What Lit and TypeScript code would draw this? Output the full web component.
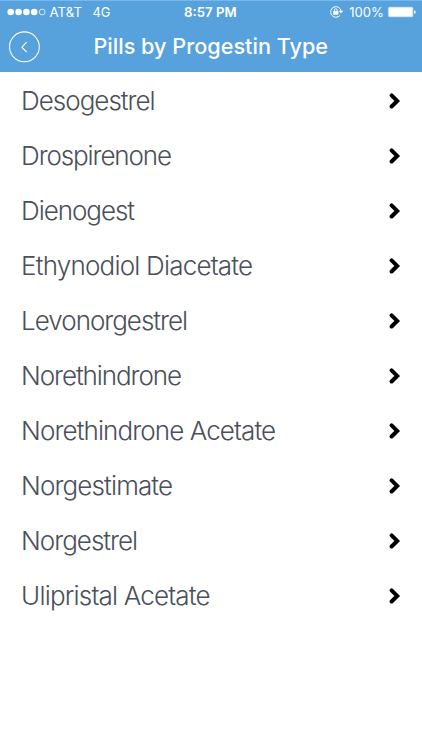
import { LitElement, html, css } from "lit";
import { customElement } from "lit/decorators.js";

// Progestin name and the width its label occupies in the list.
const PROGESTINS: Array<[string, number]> = [
  ["Desogestrel", 134.5],
  ["Drospirenone", 151],
  ["Dienogest", 114],
  ["Ethynodiol Diacetate", 232],
  ["Levonorgestrel", 167],
  ["Norethindrone", 161],
  ["Norethindrone Acetate", 255],
  ["Norgestimate", 152],
  ["Norgestrel", 117],
  ["Ulipristal Acetate", 189.5],
];

@customElement("status-bar")
class StatusBar extends LitElement {
  static styles = css`
    :host { display: block; height: 24px; font-size: 13.3px; }
    svg { display: block; width: 100%; height: 24px; }
    .thin { font-weight: 400; }
    .bold { font-weight: 600; }
  `;
  render() {
    return html`<svg viewBox="0 0 422 24" fill="#fff">
      <circle cx="10.7" cy="12" r="3.3" />
      <circle cx="18.6" cy="12" r="3.3" />
      <circle cx="26.4" cy="12" r="3.3" />
      <circle cx="34.2" cy="12" r="3.3" />
      <circle cx="42.2" cy="12" r="2.9" fill="none" stroke="#fff" stroke-width=".7" />
      <text class="thin" x="49.6" y="16.7" textLength="32.4" lengthAdjust="spacingAndGlyphs">AT&amp;T</text>
      <text class="thin" x="92.5" y="16.7" textLength="18" lengthAdjust="spacingAndGlyphs">4G</text>
      <text class="bold" x="184" y="16.7" textLength="52.7" lengthAdjust="spacingAndGlyphs">8:57 PM</text>
      <path d="M339.8 15.6A5.3 5.3 0 1 1 341.2 11.2" fill="none" stroke="#fff" stroke-width="1" />
      <path d="M338.8 10.8h4.4l-2.2 2.8z" />
      <rect x="333.2" y="11" width="5.2" height="3.7" rx=".4" />
      <path d="M334.4 11.3v-1.2a1.4 1.4 0 0 1 2.8 0v1.2" fill="none" stroke="#fff" stroke-width=".9" />
      <text class="thin" x="349.2" y="16.7" textLength="34.6" lengthAdjust="spacingAndGlyphs">100%</text>
      <rect x="387.9" y="6.7" width="25.4" height="10.6" rx="1.6" fill="#a9d1f2" />
      <rect x="388.8" y="7.5" width="23.6" height="9" rx=".8" />
      <path d="M414.1 10.2q1.6.4 1.6 1.8t-1.6 1.8z" />
    </svg>`;
  }
}

@customElement("nav-bar")
class NavBar extends LitElement {
  static styles = css`
    :host { display: block; height: 48px; }
    svg { display: block; width: 100%; height: 48px; }
    .title { font-size: 22px; font-weight: 500; }
  `;
  render() {
    return html`<svg viewBox="0 24 422 48" fill="#fff">
      <circle cx="24.4" cy="46.8" r="14.9" fill="none" stroke="#fff" stroke-width="1.1" />
      <path d="M26.7 42.2l-4.8 5 4.8 5" fill="none" stroke="#fff" stroke-width="1.1" />
      <text class="title" x="93.4" y="54.4" textLength="234.7" lengthAdjust="spacingAndGlyphs">Pills by Progestin Type</text>
    </svg>`;
  }
}

@customElement("progestin-row")
class ProgestinRow extends LitElement {
  static properties = { label: {}, span: { type: Number } };
  declare label: string;
  declare span: number;
  static styles = css`
    :host {
      display: flex;
      align-items: center;
      justify-content: space-between;
      height: 55px;
      padding: 0 20px 0 21px;
    }
    svg { display: block; }
    .label { width: 300px; height: 55px; font-size: 26px; font-weight: 300; fill: #4a505a; }
    .arrow { width: 13px; height: 17px; }
  `;
  render() {
    return html`<svg class="label">
        <text x="0.1" y="37" textLength=${this.span}>${this.label}</text>
      </svg>
      <svg class="arrow" viewBox="0 0 13 17">
        <path d="M2.6 3.3L8.2 8.9L2.6 14.5" fill="none" stroke="#000" stroke-width="4" stroke-linecap="round" />
      </svg>`;
  }
}

@customElement("app-root")
class AppRoot extends LitElement {
  static styles = css`
    :host {
      display: block;
      height: 750px;
      overflow: hidden;
      background: #fff;
      font-family: Inter, "Liberation Sans", sans-serif;
    }
    header { background: #57a1dc; box-shadow: inset 0 1px #78b8ea; height: 72px; }
    main { padding-top: 1px; }
  `;
  render() {
    return html`<header><status-bar></status-bar><nav-bar></nav-bar></header>
      <main>
        ${PROGESTINS.map(([name, width]) => html`<progestin-row .label=${name} .span=${width}></progestin-row>`)}
      </main>`;
  }
}
